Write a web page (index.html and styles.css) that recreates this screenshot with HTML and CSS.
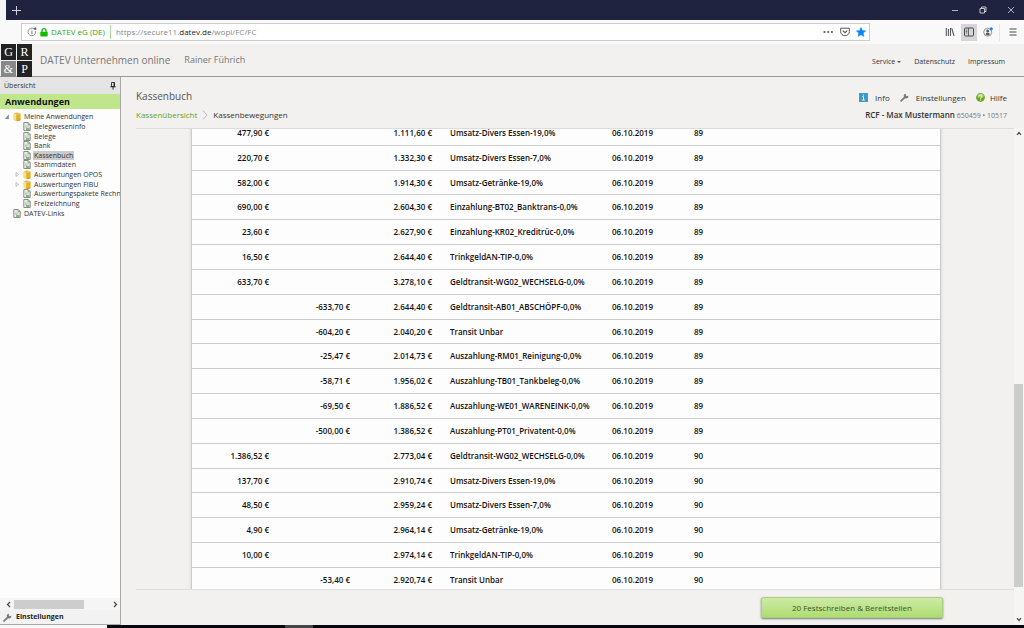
FILE: index.html
```html
<!DOCTYPE html>
<html lang="de">
<head>
<meta charset="utf-8">
<title>DATEV Unternehmen online</title>
<link rel="stylesheet" href="styles.css">
</head>
<body>
<svg class="defs" aria-hidden="true">
  <symbol id="doc" viewBox="0 0 8 9"><path d="M.8.5h4.400l2 2v6H.8z" fill="#e9efe6" stroke="#7d867b" stroke-width=".9"/><path d="M5 .5v2.200h2.200" fill="none" stroke="#7d867b" stroke-width=".7"/><path d="M2 4h3.500M2 5.300h2" stroke="#9aa39a" stroke-width=".6"/><path d="M3 8V5.800h3.500V8z" fill="#8cb08a"/></symbol>
  <symbol id="folder" viewBox="0 0 8 9"><path d="M.7 1.500 4 .4 7.600 1.500V8L4.200 8.900.7 7.900z" fill="#e5b02a"/><path d="M.7 1.500 3.200 2.200V8.600L.7 7.900z" fill="#f8e08a"/><path d="M3.200 2.200 7.500 1.500" stroke="#fbe9a8" stroke-width=".6"/><path d="M4 8.700 7.500 8" stroke="#a87b1b" stroke-width=".6"/></symbol>
  <symbol id="wrench" viewBox="0 0 10 10"><path d="M1.200 8.800 5.500 4.500" stroke="#77777f" stroke-width="1.900" stroke-linecap="round"/><path d="M6.800.7A2.500 2.500 0 0 0 4.300 4 2.500 2.500 0 0 0 9.300 3L7.500 3.600 6.300 2.600z" fill="#77777f"/></symbol>
</svg>
<header class="titlebar">
  <button class="tab-new" aria-label="Neuer Tab"><svg width="9" height="9" viewBox="0 0 9 9"><path d="M4.500 0v9M0 4.500h9" stroke="#cfd0de"/></svg></button>
  <div class="window-buttons">
    <button aria-label="Minimieren"><svg width="8" height="8" viewBox="0 0 8 8"><path d="M1 4.500h6" stroke="#d5d6e0" stroke-width=".8"/></svg></button>
    <button aria-label="Wiederherstellen"><svg width="8" height="8" viewBox="0 0 8 8"><path d="M1 2.500h4.500V7H1zM2.500 2.500V1H7v4.500H5.500" fill="none" stroke="#d5d6e0" stroke-width=".9"/></svg></button>
    <button aria-label="Schließen"><svg width="8" height="8" viewBox="0 0 8 8"><path d="m1 1 6 6M7 1 1 7" stroke="#d5d6e0" stroke-width=".8"/></svg></button>
  </div>
</header>
<nav class="toolbar">
  <div class="address">
    <svg width="10" height="10" viewBox="0 0 10 10"><path d="M7 1.800A3.800 3.800 0 1 0 8.500 4" fill="none" stroke="#777" stroke-width=".8"/><path d="M4.900 4.200v3M4.900 2.500v1" stroke="#666" stroke-width=".9"/><circle cx="8.200" cy="1.800" r="1.200" fill="#555"/></svg>
    <svg width="8" height="9" viewBox="0 0 8 9"><rect x=".3" y="3.800" width="7.400" height="4.700" rx=".7" fill="#12bc00"/><path d="M2 4V2.700a2 2 0 0 1 4 0V4" fill="none" stroke="#12bc00" stroke-width="1.300"/></svg>
    <span class="identity">DATEV eG (DE)</span>
    <span class="url">https://secure11.<b>datev.de</b>/wopl/FC/FC</span>
    <span class="address-icons">
      <svg width="11" height="10" viewBox="0 0 11 10"><g fill="#555"><circle cx="1.500" cy="5" r="1.100"/><circle cx="5.200" cy="5" r="1.100"/><circle cx="8.900" cy="5" r="1.100"/></g></svg>
      <svg width="10" height="10" viewBox="0 0 10 10"><path d="M.7 1.200h8.600v3.500a4.300 4 0 0 1-8.600 0z" fill="none" stroke="#555" stroke-width="1" stroke-linejoin="round"/><path d="m2.800 3.700 2.200 2 2.200-2" fill="none" stroke="#555" stroke-width="1.100"/></svg>
      <svg width="10" height="10" viewBox="0 0 10 10"><path d="m5 .3 1.400 3.100 3.400.4-2.500 2.300.7 3.500-3-1.800-3 1.800.7-3.500L.2 3.800l3.400-.4z" fill="#0a84ff" stroke="#0a84ff" stroke-width=".4"/></svg>
    </span>
  </div>
  <div class="tools">
    <button aria-label="Bibliothek"><svg width="10" height="10" viewBox="0 0 10 10"><path d="M1.300 1v8M3.400 2v7M5.500 1v8M6.700 1.200 9 9" fill="none" stroke="#5a5a5e" stroke-width="1.100"/></svg></button>
    <button class="active" aria-label="Seitenleiste"><svg width="10" height="10" viewBox="0 0 10 10"><rect x=".5" y="1" width="9" height="8" rx="1" fill="none" stroke="#4a4a4f"/><path d="M4.500 1v8M1.800 3h1.500M1.800 4.500h1.500M1.800 6h1.500" stroke="#4a4a4f" stroke-width=".8"/></svg></button>
    <button aria-label="Konto"><svg width="10" height="10" viewBox="0 0 10 10"><circle cx="4.700" cy="5.200" r="4" fill="none" stroke="#77777a" stroke-width=".8"/><circle cx="4.700" cy="4" r="1.500" fill="#5a5a5e"/><path d="M2.400 7.300a2.400 2 0 0 1 4.600 0 3.300 3.300 0 0 1-4.600 0z" fill="#5a5a5e"/><circle cx="8.300" cy="1.700" r="1.500" fill="#0a84ff"/></svg></button>
    <button class="menu" aria-label="Menü"><svg width="8" height="10" viewBox="0 0 8 10"><path d="M.5 2h7M.5 5h7M.5 8h7" stroke="#4a4a4f"/></svg></button>
  </div>
</nav>
<header class="app-header">
  <div class="logo"><span>G</span><span>R</span><span class="amp">&amp;</span><span>P</span></div>
  <h1>DATEV Unternehmen online</h1>
  <span class="user">Rainer Führich</span>
  <div class="header-links"><a href="#">Service<i class="caret"></i></a><a href="#">Datenschutz</a><a href="#">Impressum</a></div>
</header>
<div class="workspace">
  <aside class="sidebar">
    <div class="side-title"><span>Übersicht</span><svg width="6" height="8" viewBox="0 0 6 8"><path d="M1.500.5h3V4.500h-3zM.3 4.800h5.400M3 5v2.700M4 .5v4" fill="none" stroke="#222" stroke-width=".9"/></svg></div>
    <h2>Anwendungen</h2>
    <ul class="tree">
      <li><i class="twist open"></i><svg class="ico"><use href="#folder"/></svg><a href="#">Meine Anwendungen</a></li>
      <li class="sub"><i class="twist"></i><svg class="ico"><use href="#doc"/></svg><a href="#">Belegweseninfo</a></li>
      <li class="sub"><i class="twist"></i><svg class="ico"><use href="#doc"/></svg><a href="#">Belege</a></li>
      <li class="sub"><i class="twist"></i><svg class="ico"><use href="#doc"/></svg><a href="#">Bank</a></li>
      <li class="sub"><i class="twist"></i><svg class="ico"><use href="#doc"/></svg><a class="selected" href="#">Kassenbuch</a></li>
      <li class="sub"><i class="twist"></i><svg class="ico"><use href="#doc"/></svg><a href="#">Stammdaten</a></li>
      <li class="sub"><svg class="twist" viewBox="0 0 7 5"><path d="M2 .5 4.500 2.500 2 4.500z" fill="#fff" stroke="#999" stroke-width=".6"/></svg><svg class="ico"><use href="#folder"/></svg><a href="#">Auswertungen OPOS</a></li>
      <li class="sub"><svg class="twist" viewBox="0 0 7 5"><path d="M2 .5 4.500 2.500 2 4.500z" fill="#fff" stroke="#999" stroke-width=".6"/></svg><svg class="ico"><use href="#folder"/></svg><a href="#">Auswertungen FIBU</a></li>
      <li class="sub"><i class="twist"></i><svg class="ico"><use href="#doc"/></svg><a href="#">Auswertungspakete Rechnu</a></li>
      <li class="sub"><i class="twist"></i><svg class="ico"><use href="#doc"/></svg><a href="#">Freizeichnung</a></li>
      <li><i class="twist"></i><svg class="ico"><use href="#doc"/></svg><a href="#">DATEV-Links</a></li>
    </ul>
    <div class="side-scroll"><svg width="5" height="7" viewBox="0 0 5 7"><path d="M4 1 1.500 3.500 4 6" fill="none" stroke="#444" stroke-width="1.200"/></svg><div class="side-track"><div class="side-thumb"></div></div><svg width="5" height="7" viewBox="0 0 5 7"><path d="m1 1 2.500 2.500L1 6" fill="none" stroke="#444" stroke-width="1.200"/></svg></div>
    <button class="side-settings"><svg width="9" height="9"><use href="#wrench"/></svg>Einstellungen</button>
  </aside>
  <main class="content">
    <div class="page-head">
      <div class="page-left">
        <h2>Kassenbuch</h2>
        <div class="crumbs"><a href="#">Kassenübersicht</a><svg width="6" height="10" viewBox="0 0 6 10"><path d="m1 .5 4 4.500-4 4.500" fill="none" stroke="#bbb"/></svg><span>Kassenbewegungen</span></div>
      </div>
      <div class="page-right">
        <div class="actions">
          <a href="#"><svg width="9" height="9" viewBox="0 0 9 9"><rect width="9" height="9" fill="#409ac8"/><path d="M4.500 3.500V7M3.500 3.700h1M3.300 7h2.500M4.500 1.500v1" stroke="#fff" stroke-width="1"/></svg>Info</a>
          <a href="#"><svg width="9" height="9"><use href="#wrench"/></svg>Einstellungen</a>
          <a class="help" href="#"><svg width="9" height="9" viewBox="0 0 9 9"><circle cx="4.500" cy="4.500" r="4.400" fill="#6ca51f"/><ellipse cx="4.500" cy="2.700" rx="3.300" ry="2.200" fill="#a3cc65"/><path d="M3 3.300a1.500 1.300 0 1 1 2.300 1.100q-.8.500-.8 1.200M4.500 6.500v1" fill="none" stroke="#fff" stroke-width="1"/></svg>Hilfe</a>
        </div>
        <div class="client"><b>RCF - Max Mustermann</b> 650459 • 10517</div>
      </div>
    </div>
    <div class="page-body">
      <div class="column">
        <div class="viewport">
          <table class="entries">
            <colgroup><col class="c-in"><col class="c-out"><col class="c-bal"><col class="c-text"><col class="c-date"><col></colgroup>
            <tbody>
            <tr><td>477,90 €</td><td></td><td>1.111,60 €</td><td>Umsatz-Divers Essen-19,0%</td><td>06.10.2019</td><td>89</td></tr>
            <tr><td>220,70 €</td><td></td><td>1.332,30 €</td><td>Umsatz-Divers Essen-7,0%</td><td>06.10.2019</td><td>89</td></tr>
            <tr><td>582,00 €</td><td></td><td>1.914,30 €</td><td>Umsatz-Getränke-19,0%</td><td>06.10.2019</td><td>89</td></tr>
            <tr><td>690,00 €</td><td></td><td>2.604,30 €</td><td>Einzahlung-BT02_Banktrans-0,0%</td><td>06.10.2019</td><td>89</td></tr>
            <tr><td>23,60 €</td><td></td><td>2.627,90 €</td><td>Einzahlung-KR02_Kreditrüc-0,0%</td><td>06.10.2019</td><td>89</td></tr>
            <tr><td>16,50 €</td><td></td><td>2.644,40 €</td><td>TrinkgeldAN-TIP-0,0%</td><td>06.10.2019</td><td>89</td></tr>
            <tr><td>633,70 €</td><td></td><td>3.278,10 €</td><td>Geldtransit-WG02_WECHSELG-0,0%</td><td>06.10.2019</td><td>89</td></tr>
            <tr><td></td><td>-633,70 €</td><td>2.644,40 €</td><td>Geldtransit-AB01_ABSCHÖPF-0,0%</td><td>06.10.2019</td><td>89</td></tr>
            <tr><td></td><td>-604,20 €</td><td>2.040,20 €</td><td>Transit Unbar</td><td>06.10.2019</td><td>89</td></tr>
            <tr><td></td><td>-25,47 €</td><td>2.014,73 €</td><td>Auszahlung-RM01_Reinigung-0,0%</td><td>06.10.2019</td><td>89</td></tr>
            <tr><td></td><td>-58,71 €</td><td>1.956,02 €</td><td>Auszahlung-TB01_Tankbeleg-0,0%</td><td>06.10.2019</td><td>89</td></tr>
            <tr><td></td><td>-69,50 €</td><td>1.886,52 €</td><td>Auszahlung-WE01_WARENEINK-0,0%</td><td>06.10.2019</td><td>89</td></tr>
            <tr><td></td><td>-500,00 €</td><td>1.386,52 €</td><td>Auszahlung-PT01_Privatent-0,0%</td><td>06.10.2019</td><td>89</td></tr>
            <tr><td>1.386,52 €</td><td></td><td>2.773,04 €</td><td>Geldtransit-WG02_WECHSELG-0,0%</td><td>06.10.2019</td><td>90</td></tr>
            <tr><td>137,70 €</td><td></td><td>2.910,74 €</td><td>Umsatz-Divers Essen-19,0%</td><td>06.10.2019</td><td>90</td></tr>
            <tr><td>48,50 €</td><td></td><td>2.959,24 €</td><td>Umsatz-Divers Essen-7,0%</td><td>06.10.2019</td><td>90</td></tr>
            <tr><td>4,90 €</td><td></td><td>2.964,14 €</td><td>Umsatz-Getränke-19,0%</td><td>06.10.2019</td><td>90</td></tr>
            <tr><td>10,00 €</td><td></td><td>2.974,14 €</td><td>TrinkgeldAN-TIP-0,0%</td><td>06.10.2019</td><td>90</td></tr>
            <tr><td></td><td>-53,40 €</td><td>2.920,74 €</td><td>Transit Unbar</td><td>06.10.2019</td><td>90</td></tr>
            </tbody>
          </table>
        </div>
        <div class="page-foot"><button class="commit">20 Festschreiben &amp; Bereitstellen</button></div>
      </div>
      <div class="scrollbar"><svg width="6" height="5" viewBox="0 0 6 5"><path d="M1 3.800 3 1.500l2 2.300" fill="none" stroke="#444" stroke-width="1.200"/></svg><div class="track"><div class="thumb"></div></div><svg width="6" height="5" viewBox="0 0 6 5"><path d="m1 1.200 2 2.300 2-2.300" fill="none" stroke="#444" stroke-width="1.200"/></svg></div>
    </div>
  </main>
</div>
<footer class="taskbar"><span class="task-start"></span><span class="task-active"></span></footer>
</body>
</html>
```
FILE: styles.css
```css
* { box-sizing: border-box; }
body {
  margin: 0;
  height: 100vh;
  display: flex;
  flex-direction: column;
  overflow: hidden;
  background: #f2f1ef;
  color: #333;
  font: 8px/10px "Open Sans", "Noto Sans", sans-serif;
}
button { font: inherit; color: inherit; background: none; border: 0; padding: 0; }
a { color: inherit; text-decoration: none; }
h1, h2 { margin: 0; font-weight: 400; }
svg { flex: none; display: block; }
.defs { position: absolute; width: 0; height: 0; }

.titlebar {
  flex: none;
  height: 20px;
  display: flex;
  align-items: center;
  justify-content: space-between;
  padding: 0 9px 0 6px;
  background: #1f2340;
  border-left: 6px solid #f4f5f7;
}
.window-buttons { display: flex; gap: 20px; }

.toolbar {
  flex: none;
  height: 24px;
  display: flex;
  align-items: center;
  padding: 0 8px 0 21px;
  background: #f9f9fa;
}
.address {
  width: 849px;
  height: 18px;
  display: flex;
  align-items: center;
  padding: 0 3px 0 5px;
  gap: 3px;
  background: #fff;
  border: 1px solid #ccc;
}
.identity { color: #2ca624; padding-right: 5px; border-right: 1px solid #a5dba1; line-height: 14px; }
.url { color: #888; padding-left: 2px; }
.url b { color: #222; font-weight: 400; }
.address-icons { margin-left: auto; display: flex; gap: 6px; }
.tools { margin-left: auto; display: flex; align-items: center; gap: 3px; }
.tools button { width: 16px; height: 17px; display: grid; place-items: center; }
.tools .active { background: #d6d6d7; }
.tools .menu { width: 17px; padding-left: 9px; border-left: 1px solid #e6e6e8; }

.app-header {
  flex: none;
  height: 33px;
  display: flex;
  align-items: center;
  padding: 0 19px 0 1px;
  border-bottom: 1px solid #999b95;
}
.logo { width: 31px; height: 32px; display: grid; grid-template-columns: 15px 15px; gap: 1px; }
.logo span { background: #222; color: #fff; font: 12px/16px "Liberation Serif", serif; text-align: center; }
.logo .amp { background: #888; }
h1 { margin-left: 8px; font-size: 10px; line-height: 14px; color: #777; }
.user { margin-left: 14px; font-size: 9px; line-height: 14px; color: #777; }
.header-links { margin-left: auto; display: flex; gap: 13px; font-size: 7px; padding-top: 4px; }
.caret { display: inline-block; margin-left: 2px; vertical-align: 1px; border: 2px solid transparent; border-top-color: #555; border-bottom: 0; }

.workspace { flex: 1; min-height: 0; display: flex; }
.sidebar {
  flex: none;
  width: 121px;
  display: flex;
  flex-direction: column;
  background: #fdfdfd;
  border-right: 1px solid #a8a8a8;
  overflow: hidden;
}
.side-title {
  height: 17px;
  display: flex;
  align-items: center;
  justify-content: space-between;
  padding: 0 4px;
  background: #e5e5e5;
  font-size: 7px;
}
.sidebar h2 { padding-left: 5px; background: #c0e68c; color: #111; font-size: 9px; line-height: 15px; font-weight: 700; }
.tree {
  height: 109px;
  display: grid;
  grid-template-rows: repeat(11, 1fr);
  margin: 0 0 auto;
  padding: 3px 0 0 4px;
  list-style: none;
  font-size: 7px;
  line-height: 9px;
}
.tree li { display: flex; align-items: center; min-height: 0; white-space: nowrap; }
.tree .sub { padding-left: 10px; }
.tree a { padding: 0 1px; margin-left: 2px; }
.tree .selected { background: #cbcbcb; }
.ico { width: 8px; height: 9px; }
.twist { flex: none; width: 7px; height: 5px; margin-right: 2px; }
.open { background: #888; clip-path: polygon(70% 0, 70% 100%, 10% 100%); }
.side-scroll { height: 12px; display: flex; align-items: center; padding: 0 2px 0 6px; gap: 3px; background: #f5f5f5; }
.side-track { flex: 1; }
.side-thumb { width: 70px; height: 9px; background: #cdcdcd; }
.side-settings { height: 15px; display: flex; align-items: center; gap: 4px; padding-left: 3px; background: #f2f2f2; border-bottom: 1px solid #aaa; font-size: 7px; font-weight: 700; color: #222; }

.content { flex: 1; min-width: 0; display: flex; flex-direction: column; }
.page-head { height: 51px; display: flex; justify-content: space-between; padding: 12px 17px 0 15px; }
.page-left h2 { font-size: 10px; line-height: 15px; color: #555; }
.crumbs { display: flex; align-items: center; gap: 5px; margin-top: 5px; line-height: 12px; }
.crumbs a { color: #5fa52a; font-weight: 500; }
.page-right { display: flex; flex-direction: column; align-items: flex-end; gap: 6px; padding-top: 3px; }
.actions { display: flex; gap: 10px; }
.actions a { display: flex; align-items: center; gap: 7px; line-height: 11px; }
.actions .help { gap: 5px; }
.client { font-size: 7px; line-height: 11px; color: #777; }
.client b { font-size: 8px; font-weight: 600; color: #333; }

.page-body { flex: 1; min-height: 0; display: flex; }
.column { flex: 1; min-width: 0; display: flex; flex-direction: column; padding-left: 15px; }
.viewport {
  flex: 1;
  min-height: 0;
  overflow: hidden;
  padding: 0 73px 0 55px;
  border-top: 1px solid #dcdcdc;
  border-bottom: 1px solid #dedede;
}
.entries {
  width: 100%;
  height: 472px;
  margin-top: -8px;
  table-layout: fixed;
  border-collapse: separate;
  border-spacing: 0;
  background: #fdfdfd;
  border: solid #ccc;
  border-width: 0 1px;
  box-shadow: 0 0 3px #ccc;
  color: #111;
  font-weight: 600;
}
.entries td { padding: 0; border-bottom: 1px solid #ccc; white-space: nowrap; }
.entries td:nth-child(-n+3) { text-align: right; }
.entries td:nth-child(4) { padding-left: 18px; }
.c-in { width: 77px; }
.c-out { width: 81px; }
.c-bal { width: 82px; }
.c-text { width: 180px; }
.c-date { width: 82px; }

.page-foot { height: 35px; padding: 7px 71px 0 0; text-align: right; }
.commit {
  width: 182px;
  height: 21px;
  border: 1px solid #a9d07c;
  border-radius: 2px;
  background: linear-gradient(#cdeaa6, #aedd70);
  box-shadow: 0 1px 2px #777;
  color: #3f5230;
  font-weight: 500;
}
.scrollbar { width: 10px; display: flex; flex-direction: column; align-items: center; padding: 3px 0; background: #f4f5f4; }
.track { flex: 1; align-self: stretch; display: flex; flex-direction: column; justify-content: flex-end; padding: 0 1px 30px 0; }
.thumb { height: 45%; flex: none; background: #cbcdcb; }
.taskbar { flex: none; height: 3px; display: flex; background: #08080c; }
.task-start { width: 107px; background: #f7f7f7; }
.task-active { width: 28px; margin-left: 178px; background: #444; }
```
